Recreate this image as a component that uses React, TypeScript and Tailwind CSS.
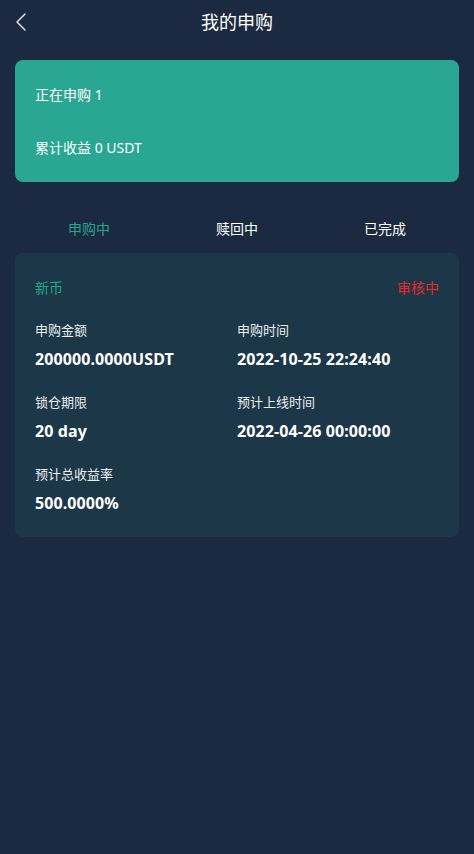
import React from "react";

const font = { fontFamily: '"Segoe UI", "Noto Sans", "Noto Sans CJK SC", sans-serif' };

function Item({ label, value }: { label: string; value: string }) {
  return (
    <div className="flex flex-col">
      <div className="text-[13px] leading-[20px] text-[#e8eef2]">{label}</div>
      <div className="mt-[9px] text-[16px] leading-[20px] font-bold text-white tracking-[0.1px]">{value}</div>
    </div>
  );
}

export default function App() {
  return (
    <div className="w-[474px] min-h-[854px] bg-[#1c2a41] text-white" style={font}>
      <div className="relative h-[44px] flex items-center justify-center">
        <svg className="absolute left-[14px] top-[12px]" width="14" height="20" viewBox="0 0 14 20" fill="none">
          <path d="M11 2 L3 10 L11 18" stroke="#d6dde6" strokeWidth="1.6" strokeLinecap="round" strokeLinejoin="round" />
        </svg>
        <div className="text-[18px] text-white">我的申购</div>
      </div>

      <div className="px-[15px] pt-[16px]">
        <div className="h-[122px] rounded-[8px] bg-[#2aa792] px-[20px] flex flex-col justify-center gap-[33px]">
          <div className="text-[14px] leading-[20px] text-white">正在申购 1</div>
          <div className="text-[14px] leading-[20px] text-white">累计收益 0 USDT</div>
        </div>

        <div className="flex mt-[34px] h-[24px] items-center">
          <div className="flex-1 text-center text-[14px] text-[#25a58d]">申购中</div>
          <div className="flex-1 text-center text-[14px] text-white">赎回中</div>
          <div className="flex-1 text-center text-[14px] text-white">已完成</div>
        </div>

        <div className="mt-[13px] rounded-[8px] bg-[#1c3748] px-[20px] pt-[24px] pb-[24px]">
          <div className="flex justify-between h-[20px] items-center">
            <div className="text-[14px] text-[#22a48b]">新币</div>
            <div className="text-[14px] text-[#e8292b]">审核中</div>
          </div>
          <div className="grid grid-cols-2 gap-y-[23px] mt-[23px]">
            <Item label="申购金额" value="200000.0000USDT" />
            <Item label="申购时间" value="2022-10-25 22:24:40" />
            <Item label="锁仓期限" value="20 day" />
            <Item label="预计上线时间" value="2022-04-26 00:00:00" />
            <Item label="预计总收益率" value="500.0000%" />
          </div>
        </div>
      </div>
    </div>
  );
}
